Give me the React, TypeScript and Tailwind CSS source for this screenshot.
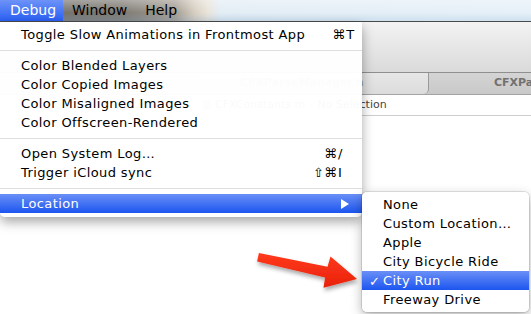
type Entry =
  | { kind: "item"; label: string; mods?: string; keyChar?: string; submenu?: boolean; active?: boolean }
  | { kind: "sep" };

const mainItems: Entry[] = [
  { kind: "item", label: "Toggle Slow Animations in Frontmost App", mods: "⌘", keyChar: "T" },
  { kind: "sep" },
  { kind: "item", label: "Color Blended Layers" },
  { kind: "item", label: "Color Copied Images" },
  { kind: "item", label: "Color Misaligned Images" },
  { kind: "item", label: "Color Offscreen-Rendered" },
  { kind: "sep" },
  { kind: "item", label: "Open System Log…", mods: "⌘", keyChar: "/" },
  { kind: "item", label: "Trigger iCloud sync", mods: "⇧⌘", keyChar: "I" },
  { kind: "sep" },
  { kind: "item", label: "Location", submenu: true, active: true },
];

const locations = ["None", "Custom Location…", "Apple", "City Bicycle Ride", "City Run", "Freeway Drive"];
const checked = "City Run";

function MenuBar() {
  return (
    <div className="relative h-[22px] flex items-stretch border-b border-[#4a4a4a] bg-[linear-gradient(90deg,#6f6c67_0px,#7d7973_120px,#a49d92_175px,#d8cfc2_195px,#e9e4da_208px,#e3edf5_220px,#e6f0f8_531px)] text-[14px] text-black">
      <div className="absolute inset-0 bg-[linear-gradient(180deg,rgba(255,255,255,0.35),rgba(255,255,255,0)_60%,rgba(140,180,215,0.25))]" />
      <div className="relative w-[63px] pl-[10px] flex items-center text-white bg-[linear-gradient(180deg,#6d93f7,#2a5ff3)]">
        Debug
      </div>
      <div className="relative pl-[9px] pr-[9px] flex items-center">Window</div>
      <div className="relative pl-[9px] flex items-center">Help</div>
    </div>
  );
}

function BackgroundWindow() {
  return (
    <div className="flex flex-col">
      <div className="h-[51px] bg-[linear-gradient(180deg,#f3f3f3,#dadada)] border-b border-[#8f8f8f]" />
      <div className="h-[22px] flex bg-[linear-gradient(180deg,#d4d4d4,#c9c9c9)] border-b border-[#a3a3a3] text-[11px] font-bold text-[#727272] whitespace-nowrap overflow-hidden">
        <div className="w-[200px] shrink-0" />
        <div className="w-[229px] shrink-0 flex items-center pl-[40px] text-[#9a9a9a] bg-[linear-gradient(180deg,#e6e6e6,#dcdcdc)] border-r border-[#9a9a9a] rounded-br-[5px]">
          CFXParseManager.h
        </div>
        <div className="shrink-0 flex items-center pl-[65px]">CFXParseManager.m</div>
      </div>
      <div className="h-[21px] flex items-center gap-[4px] pl-[203px] bg-white border-b border-[#cdcdcd] text-[11px] text-[#444] whitespace-nowrap">
        <span className="w-[8px] h-[10px] bg-[#b8c4d4] rounded-[1px]" />
        <span>CFXConstants.m</span>
        <span className="text-[#999]">›</span>
        <span>No Selection</span>
      </div>
      <div className="flex-1 bg-white" />
    </div>
  );
}

function MainMenu() {
  return (
    <div className="absolute left-0 top-[22px] w-[362px] pt-[3px] pb-[4px] bg-white/[0.97] rounded-b-[5px] shadow-[0_5px_12px_rgba(0,0,0,0.35)] text-[13px] tracking-[0.4px] text-black">
      {mainItems.map((e, i) =>
        e.kind === "sep" ? (
          <div key={i} className="h-[12px] flex items-center">
            <div className="w-full h-px bg-[#dedede]" />
          </div>
        ) : (
          <div
            key={i}
            className={
              e.active
                ? "h-[19px] flex items-center pl-[21px] pr-[13px] text-white bg-[linear-gradient(180deg,#6a8ff6,#1c55ef)]"
                : "h-[19px] flex items-center pl-[21px] pr-[12px]"
            }
          >
            <span className="flex-1 whitespace-nowrap">{e.label}</span>
            {e.mods && (
              <span className="flex tracking-normal">
                <span className="w-[40px] text-right">{e.mods}</span>
                <span className="w-[13px] pl-[1px]">{e.keyChar}</span>
              </span>
            )}
            {e.submenu && (
              <svg width="8" height="10" viewBox="0 0 8 10">
                <path d="M0 0 L8 5 L0 10 Z" fill="#fff" />
              </svg>
            )}
          </div>
        )
      )}
    </div>
  );
}

function SubMenu() {
  return (
    <div className="absolute left-[362px] top-[192px] w-[167px] pt-[3px] pb-[3px] bg-white/[0.97] rounded-[5px] shadow-[0_0_0_1px_rgba(0,0,0,0.1),0_4px_12px_rgba(0,0,0,0.3)] text-[13px] tracking-[0.4px] text-black">
      {locations.map((l) => (
        <div
          key={l}
          className={
            l === checked
              ? "relative h-[19px] flex items-center pl-[21px] text-white bg-[linear-gradient(180deg,#6a8ff6,#1c55ef)]"
              : "relative h-[19px] flex items-center pl-[21px]"
          }
        >
          {l === checked && <span className="absolute left-[7px] top-[1px]">✓</span>}
          <span className="whitespace-nowrap">{l}</span>
        </div>
      ))}
    </div>
  );
}

function Arrow() {
  return (
    <svg className="absolute left-0 top-0 pointer-events-none" width="531" height="314" viewBox="0 0 531 314">
      <defs>
        <filter id="arrowShadow" x="-20%" y="-40%" width="140%" height="180%">
          <feDropShadow dx="1" dy="3" stdDeviation="2" floodColor="#000" floodOpacity="0.35" />
        </filter>
        <linearGradient id="arrowFill" x1="0" y1="0" x2="0" y2="1">
          <stop offset="0" stopColor="#ff3a1c" />
          <stop offset="1" stopColor="#e8220a" />
        </linearGradient>
      </defs>
      <polygon
        points="258.9,253.1 327.5,266.8 330.5,256.6 357,279 323.5,287.8 325.1,277.6 257.1,261.4"
        fill="url(#arrowFill)"
        filter="url(#arrowShadow)"
      />
    </svg>
  );
}

export default function App() {
  return (
    <div className="relative w-[531px] h-[314px] overflow-hidden bg-white flex flex-col font-['DejaVu_Sans',sans-serif]">
      <MenuBar />
      <BackgroundWindow />
      <MainMenu />
      <SubMenu />
      <Arrow />
    </div>
  );
}
